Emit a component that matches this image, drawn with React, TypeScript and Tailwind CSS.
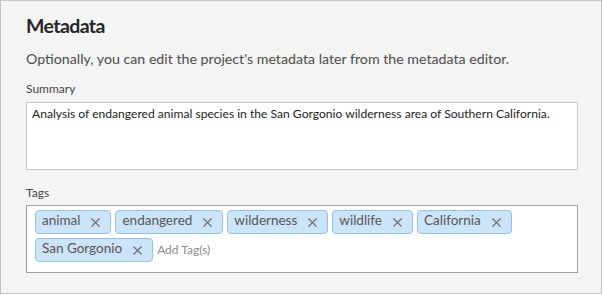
import { X } from 'lucide-react';

const TAGS = ['animal', 'endangered', 'wilderness', 'wildlife', 'California', 'San Gorgonio'];

function Tag({ label }: { label: string }) {
  return (
    <div className="flex h-[24px] items-center gap-[8px] rounded-[4px] border border-[#8fc3ee] bg-[#cce4f7] pl-[6px] pr-[7px] text-[13.5px] text-[#555]">
      <span className="leading-none pb-[2px]">{label}</span>
      <X size={15} strokeWidth={1.7} className="text-[#6a6a6a]" />
    </div>
  );
}

export default function App() {
  return (
    <div
      className="w-[602px] h-[294px] border border-[#c4c4c4] bg-[#f4f4f4] pl-[25px] pr-[24px] pt-[8px]"
      style={{ fontFamily: 'Lato, "Noto Sans", sans-serif' }}
    >
      <h1 className="text-[19.5px] font-bold leading-[34px] tracking-[-0.6px] text-[#262626]">Metadata</h1>
      <p className="mt-[6px] text-[14.2px] leading-[20px] text-[#4c4c4c]">
        Optionally, you can edit the project's metadata later from the metadata editor.
      </p>

      <div className="mt-[12px] text-[12px] leading-[16px] text-[#444]">Summary</div>
      <div className="mt-[5px] h-[68px] w-[552px] border border-[#c8c8c8] bg-white px-[5px] pt-[3px] text-[12.1px] leading-[16px] text-[#222]">
        Analysis of endangered animal species in the San Gorgonio wilderness area of Southern California.
      </div>

      <div className="mt-[15px] text-[12px] leading-[16px] text-[#444]">Tags</div>
      <div className="mt-[4px] h-[68px] w-[552px] border border-[#a0a0a0] bg-white pl-[8px] pr-[8px] pt-[4px]">
        <div className="flex flex-wrap items-center gap-x-[4px] gap-y-[4px]">
          {TAGS.map((t) => (
            <Tag key={t} label={t} />
          ))}
          <span className="text-[12px] text-[#8a8a8a]">Add Tag(s)</span>
        </div>
      </div>
    </div>
  );
}
